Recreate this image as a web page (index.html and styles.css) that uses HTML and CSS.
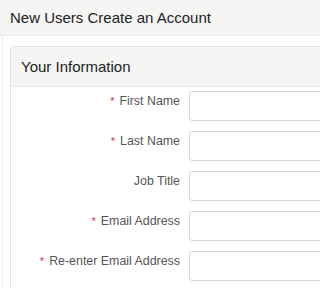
FILE: index.html
```html
<!DOCTYPE html>
<html>
<head>
<meta charset="utf-8">
<link rel="stylesheet" href="styles.css">
</head>
<body>
<div class="page-header">New Users Create an Account</div>
<div class="content">
  <div class="panel">
    <div class="panel-heading">Your Information</div>
    <div class="panel-body">
      <div class="row"><label class="lbl"><span class="req">*</span>First Name</label><div class="field"></div></div>
      <div class="row"><label class="lbl"><span class="req">*</span>Last Name</label><div class="field"></div></div>
      <div class="row"><label class="lbl">Job Title</label><div class="field"></div></div>
      <div class="row"><label class="lbl"><span class="req">*</span>Email Address</label><div class="field"></div></div>
      <div class="row"><label class="lbl"><span class="req">*</span>Re-enter Email Address</label><div class="field"></div></div>
    </div>
  </div>
</div>
</body>
</html>
```
FILE: styles.css
```css
html, body {
  margin: 0;
  padding: 0;
  background: #ffffff;
  font-family: "Liberation Sans", Arial, sans-serif;
  overflow: hidden;
}
.page-header {
  height: 36px;
  box-sizing: border-box;
  background: #f5f5f4;
  border-bottom: 1px solid #ececec;
  padding-left: 10px;
  font-size: 15px;
  line-height: 36px;
  color: #222;
}
.content {
  margin-left: 2px;
  border-left: 1px solid #ececec;
  padding: 10px 0 0 7px;
}
.panel {
  border: 1px solid #e2e2e2;
  border-right: none;
  border-bottom: none;
  border-radius: 4px 0 0 0;
}
.panel-heading {
  height: 40px;
  box-sizing: border-box;
  background: #f5f5f4;
  border-bottom: 1px solid #ececec;
  padding-left: 10px;
  font-size: 15px;
  line-height: 40px;
  color: #222;
  border-radius: 4px 0 0 0;
}
.panel-body {
  padding: 4px 0 6px;
  display: flex;
  flex-direction: column;
  gap: 10px;
}
.row {
  display: flex;
  align-items: flex-start;
}
.lbl {
  width: 169px;
  flex: none;
  text-align: right;
  font-size: 12.4px;
  color: #555;
  padding-top: 2px;
  line-height: 16px;
}
.req {
  color: #d0343a;
  margin-right: 5px;
  font-size: 11px;
}
.field {
  margin-left: 9px;
  height: 30px;
  box-sizing: border-box;
  flex: 1;
  border: 1px solid #d6d6d6;
  border-right: none;
  border-radius: 4px 0 0 4px;
  background: #fff;
}
```
